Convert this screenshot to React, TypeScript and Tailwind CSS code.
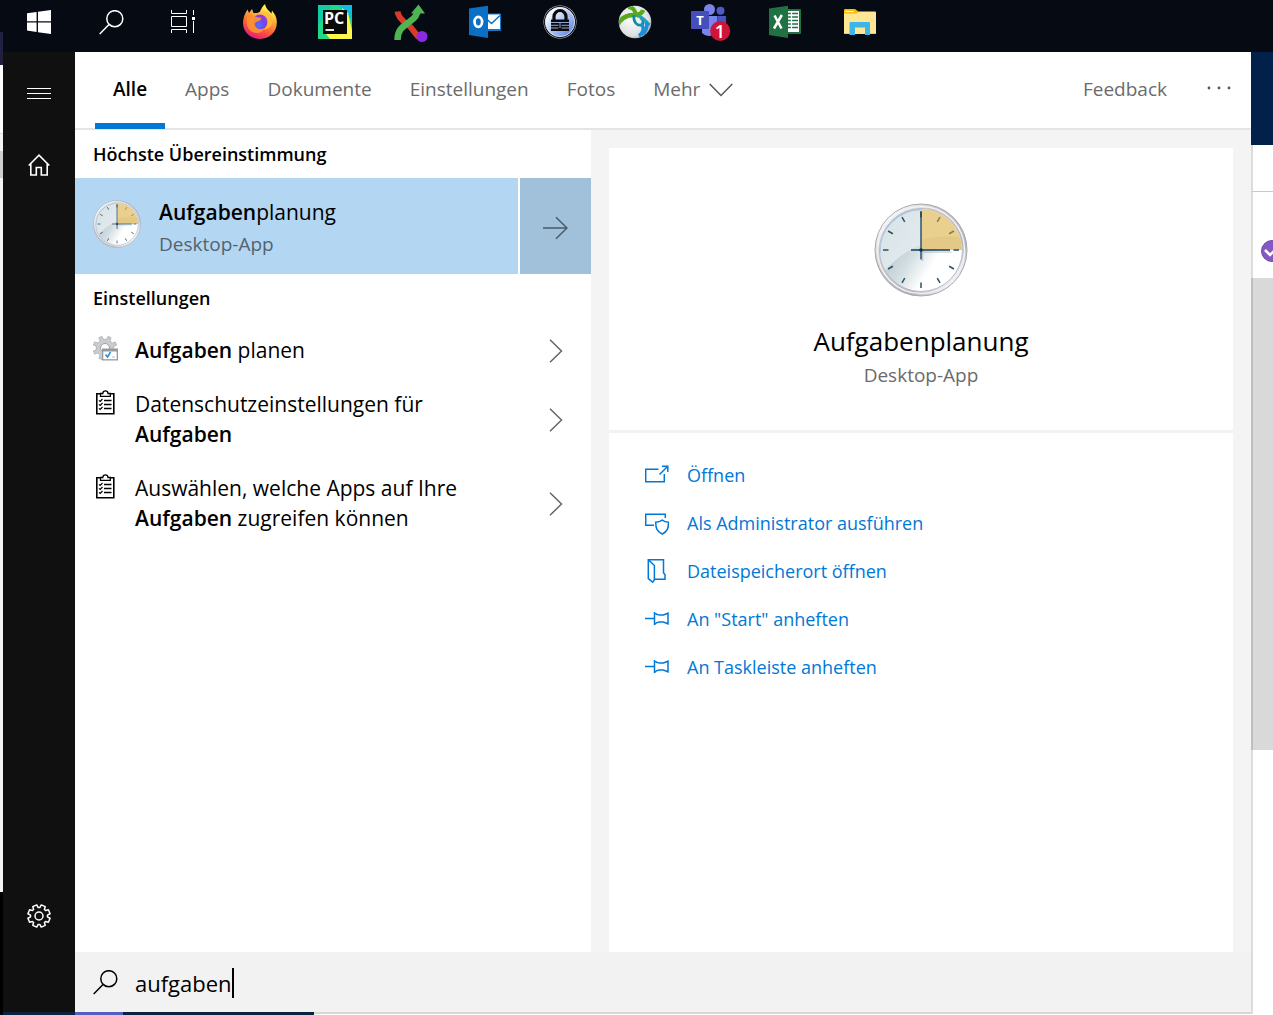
import React from "react";

function gearPath(c: number, teeth: number, outer: number, inner: number, top: number, base: number, offset: number) {
  const pt = (r: number, deg: number) => {
    const a = ((deg - 90) * Math.PI) / 180;
    return `${(c + r * Math.cos(a)).toFixed(2)} ${(c + r * Math.sin(a)).toFixed(2)}`;
  };
  const step = 360 / teeth;
  let d = "";
  for (let i = 0; i < teeth; i++) {
    const m = offset + i * step;
    d += `${i ? "L" : "M"}${pt(inner, m - base)}L${pt(outer, m - top)}L${pt(outer, m + top)}L${pt(inner, m + base)}`;
  }
  return d + "Z";
}

function WindowsIcon() {
  return (
    <svg viewBox="27 10 24 24" className="h-6 w-6" fill="#fff">
      <path d="M27 13.3 36.6 12v9.2H27zM38 11.8 51 10v11.2H38zM27 22.6h9.6V32L27 30.6zM38 22.6h13V34l-13-1.8z" />
    </svg>
  );
}

function SearchIcon() {
  return (
    <svg viewBox="0 0 25 25" className="h-[25px] w-[25px]" fill="none" stroke="currentColor" strokeWidth="1.5">
      <circle cx="15.8" cy="8.7" r="8" />
      <path d="M10 14.5.7 24" />
    </svg>
  );
}

function TaskViewIcon() {
  return (
    <svg viewBox="171 10 25 24" className="h-6 w-[25px]" fill="none" stroke="#fff">
      <path d="M171.5 10v3.5h15V10M171.5 16.5h15v10h-15zM171.5 33v-3.5h15V33M193.5 10v5M193.5 21v12" />
      <path d="M192 17h3v3h-3z" fill="#fff" stroke="none" />
    </svg>
  );
}

function FirefoxIcon() {
  return (
    <svg viewBox="242 4 36 37" className="h-[37px] w-9">
      <defs>
        <linearGradient id="ffBody" x1="0.75" y1="0" x2="0.3" y2="1">
          <stop offset="0.1" stopColor="#fff44f" />
          <stop offset="0.4" stopColor="#ffa436" />
          <stop offset="0.68" stopColor="#ff5b36" />
          <stop offset="1" stopColor="#e31587" />
        </linearGradient>
        <radialGradient id="ffGlobe" cx="0.4" cy="0.7" r="0.8">
          <stop offset="0" stopColor="#5b6df8" />
          <stop offset="0.6" stopColor="#7542e5" />
          <stop offset="1" stopColor="#b833e1" />
        </radialGradient>
      </defs>
      <path d="M243 23c0-5 1.700-9 4.500-13.500L249 13l3-4 1.500 4c3 .2 5 .2 6.500-1.500 1-2 2.500-5.500 5-7.500 .5 3 2 5 4.500 7.500l2 2 .5-3c3 4 5 7 4.800 12C277 32 269.500 39 260 39S243 32 243 23z" fill="url(#ffBody)" />
      <circle cx="260" cy="22" r="7.500" fill="url(#ffGlobe)" />
      <path d="M247 17c3-1.500 7-1 9.500 0 1.500.7 4.500 0 5 1.500-.5 2-3 2.500-5 3.500-2 .8-2 3-1 4.500 2 3 6 3.500 9 1.500-1.500 4-6 6-10.500 4.500C248 31 246 25 247 17z" fill="#ff932f" opacity="0.9" />
      <path d="M257 14.500c4-3 9-1.500 11 2l-2-.5c3 4 2 11-3 14 9-1 12-9 8-15-3-4-9-5-14-.5z" fill="#ffbd3b" opacity="0.85" />
    </svg>
  );
}

function PyCharmIcon() {
  return (
    <svg viewBox="318 5 34 34" className="h-[34px] w-[34px]">
      <path d="M318 5h34v34h-34z" fill="#21d789" />
      <path d="M318 5h13l-6 13-7 6z" fill="#15c9a5" />
      <path d="M339 5h13v14l-6-3z" fill="#0bbfe0" />
      <path d="M342 8l6 5 4 17v9h-22l-4-5 18-10z" fill="#fcf84a" />
      <path d="M323 10h24v24h-24z" fill="#0a0a0a" />
      <path d="M325.500 30h8.500" stroke="#fff" strokeWidth="1.800" />
      <text x="324" y="24" fill="#fff" fontFamily="Open Sans, sans-serif" fontWeight="700" fontSize="16">PC</text>
    </svg>
  );
}

function CrossArrowIcon() {
  return (
    <svg viewBox="394 3 36 39" className="h-[39px] w-9" fill="none">
      <path d="M399.500 11.500c1 8 8 11 11.500 14 4 4 6 8 10 12" stroke="#db3a2b" strokeWidth="6" />
      <path d="M399.500 40c0-10 5-13 11-17.500 5-4 9-6 9-13" stroke="#4db551" strokeWidth="6.500" />
      <path d="M420.500 4.500 427 13.500h-14z" fill="#4db551" />
      <circle cx="424" cy="36.500" r="5.500" fill="#8a2be2" />
    </svg>
  );
}

function OutlookIcon() {
  return (
    <svg viewBox="468 5 33 34" className="h-[34px] w-[33px]">
      <rect x="484" y="13.500" width="17" height="17.500" rx="1" fill="#1379d0" />
      <path d="M486 14.500h14v14.500h-14z" fill="#fff" />
      <path d="M485 17.500l6.500 6 8.500-8" fill="none" stroke="#0a70c6" strokeWidth="1.500" />
      <path d="M469 8.500 488 5.800v32.200l-19-3z" fill="#0a70c6" />
      <ellipse cx="478.300" cy="21.800" rx="3.800" ry="5" fill="none" stroke="#fff" strokeWidth="2.700" />
    </svg>
  );
}

function KeePassIcon() {
  return (
    <svg viewBox="543 5 34 34" className="h-[34px] w-[34px]">
      <defs>
        <linearGradient id="kp" x1="0" y1="0" x2="1" y2="1">
          <stop offset="0.2" stopColor="#f2f6ff" />
          <stop offset="1" stopColor="#4a76e0" />
        </linearGradient>
      </defs>
      <circle cx="560" cy="22" r="16.500" fill="#c9ccd4" />
      <circle cx="560" cy="22" r="16" fill="#000" />
      <circle cx="560" cy="22" r="14.700" fill="url(#kp)" stroke="#f5f7fc" strokeWidth="0.800" />
      <path d="M554 20v-3.500a6 6 0 0 1 12 0V20" fill="none" stroke="#0a0a0a" strokeWidth="3.200" />
      <path d="M551 19.500h18v11.500h-18z" fill="#0a0a0a" />
      <path d="M551 22.500h18M551 25.300h7.500M561.500 25.300h7.500M551 28h7.500M561.500 28h7.500M560 23v5" stroke="#9db6ef" strokeWidth="0.900" />
    </svg>
  );
}

function CiscoIcon() {
  return (
    <svg viewBox="618 5 34 34" className="h-[34px] w-[34px]">
      <defs>
        <radialGradient id="globe" cx="0.4" cy="0.4" r="0.65">
          <stop offset="0" stopColor="#ffffff" />
          <stop offset="0.8" stopColor="#dcdfe0" />
          <stop offset="1" stopColor="#a7adb0" />
        </radialGradient>
        <clipPath id="globeClip"><circle cx="635" cy="22" r="16" /></clipPath>
      </defs>
      <circle cx="635" cy="22" r="16.300" fill="url(#globe)" />
      <g clipPath="url(#globeClip)" fill="none">
        <path d="M617 26c3-7 9-11 17-11 5 0 8-1 9-5" stroke="#56a91c" strokeWidth="4.500" />
        <path d="M628 7c4 0 7 3 8 8" stroke="#56a91c" strokeWidth="4" />
        <path d="M634 15c-1 7 3 11 7 10 3-1 3-6-1-7" stroke="#0c8fa0" strokeWidth="2.800" />
        <path d="M637 16c6 0 9 6 13 9" stroke="#2aa0b8" strokeWidth="3" />
        <path d="M641 24c4 4 2 9-2 12M646 22c2 4 0 9-4 13" stroke="#1a8fdc" strokeWidth="3.500" />
      </g>
    </svg>
  );
}

function TeamsIcon() {
  return (
    <svg viewBox="690 4 42 40" className="h-10 w-[42px]">
      <circle cx="721.500" cy="12.800" r="4" fill="#5059c9" />
      <path d="M719 18h8v10a6 6 0 0 1-8 5z" fill="#4b53bc" />
      <circle cx="710.500" cy="11.500" r="5.500" fill="#7b83eb" />
      <path d="M703 18h15.500v12a9 9 0 0 1-15.500 5z" fill="#7b83eb" />
      <rect x="692" y="13" width="18" height="18" rx="1" fill="#464ebc" />
      <text x="701" y="27" textAnchor="middle" fill="#fff" fontFamily="Open Sans, sans-serif" fontWeight="700" fontSize="13">T</text>
      <circle cx="721.200" cy="33" r="10" fill="#cf1437" />
      <text x="721" y="39.500" textAnchor="middle" fill="#fff" fontFamily="Open Sans, sans-serif" fontWeight="600" fontSize="18">1</text>
    </svg>
  );
}

function ExcelIcon() {
  return (
    <svg viewBox="768 5 33 34" className="h-[34px] w-[33px]">
      <rect x="784" y="9" width="17" height="25" rx="1" fill="#207245" />
      <path d="M786 11h13v21h-13z" fill="#fff" />
      <path d="M787 13.500h11M787 17h11M787 20.500h11M787 24h11M787 27.500h11" stroke="#207245" strokeWidth="1.600" />
      <path d="M791.500 11v21" stroke="#fff" strokeWidth="1.200" />
      <path d="M769 8.500 788 5.800v32.200l-19-3z" fill="#207245" />
      <path d="M774.500 15.500l7 13M781.800 15 774 28.500" stroke="#fff" strokeWidth="2.500" />
    </svg>
  );
}

function ExplorerIcon() {
  return (
    <svg viewBox="844 7 32 30" className="h-[30px] w-8">
      <path d="M844 11V10a1 1 0 0 1 1-1h10l4 3v4h-15z" fill="#ffb900" />
      <path d="M845.500 11.500h8" stroke="#fff" strokeWidth="1.200" />
      <path d="M844 13.500h12.500l2.500-2h16a1 1 0 0 1 1 1V33a1 1 0 0 1-1 1h-30a1 1 0 0 1-1-1z" fill="#ffe694" />
      <path d="M849.500 35V23a1 1 0 0 1 1-1h18.500a1 1 0 0 1 1 1v12h-5v-7.500h-10V35z" fill="#3db5e8" />
      <path d="M844 33.500h5.500M870 33.500h6" stroke="#f5c74f" />
    </svg>
  );
}

function ClockIcon({ className, id }: { className: string; id: string }) {
  const ticks = [30, 60, 90, 120, 150, 180, 210, 240, 270, 300, 330, 360];
  return (
    <svg viewBox="0 0 94 94" className={className}>
      <defs>
        <linearGradient id={`${id}Rim`} x1="0" y1="0" x2="1" y2="1">
          <stop offset="0" stopColor="#b9bcc2" />
          <stop offset="0.15" stopColor="#f8f8fa" />
          <stop offset="0.35" stopColor="#c9c7cd" />
          <stop offset="0.7" stopColor="#b5b2b8" />
          <stop offset="0.85" stopColor="#f3f2f4" />
          <stop offset="1" stopColor="#b3b0b5" />
        </linearGradient>
        <linearGradient id={`${id}Face`} x1="0.1" y1="0.4" x2="0.75" y2="0.8">
          <stop offset="0" stopColor="#b4c5c9" />
          <stop offset="0.45" stopColor="#d3dfe2" />
          <stop offset="0.8" stopColor="#ffffff" />
        </linearGradient>
        <clipPath id={`${id}Clip`}><circle cx="47" cy="47" r="41" /></clipPath>
      </defs>
      <circle cx="47" cy="47" r="46" fill={`url(#${id}Rim)`} stroke="#aaa8ad" strokeWidth="1" />
      <circle cx="47" cy="47" r="43.500" fill="none" stroke="#f1f1f4" strokeWidth="1.500" />
      <circle cx="47" cy="47" r="41.500" fill={`url(#${id}Face)`} stroke="#b5bfcb" strokeWidth="1" />
      <g clipPath={`url(#${id}Clip)`}>
        <path d="M0 0h94v33C60 34 28 44 8 72L0 80z" fill="#e3ebee" opacity="0.85" />
        <path d="M5.500 50A41.500 41.500 0 0 1 47 6" fill="none" stroke="#a9bfda" strokeWidth="2.500" />
        <path d="M47 47V0H94v47z" fill="#e9d08f" />
        <path d="M47 47V37C61 33 75 33 94 34v13z" fill="#e0c680" opacity="0.7" />
      </g>
      {ticks.map((t) => (
        <path key={t} d="M47 9v5.500" stroke={t < 90 ? "#857b4d" : "#2a4f66"} strokeWidth="1.500" transform={`rotate(${t} 47 47)`} />
      ))}
      <path d="M48.500 49h29M48.500 48v10" stroke="#6d8aa8" strokeWidth="1.500" opacity="0.35" />
      <path d="M37 47h39M47 8v48.500" stroke="#173f58" strokeWidth="1.300" />
      <circle cx="47" cy="47" r="1.800" fill="#0c2f47" />
    </svg>
  );
}

function GearIcon() {
  return (
    <svg viewBox="0 0 24 24" className="h-6 w-6" fill="none" stroke="#fff" strokeWidth="1.500" strokeLinejoin="round">
      <path d={gearPath(12, 8, 11.3, 8.5, 11, 17, 22.5)} />
      <circle cx="12" cy="12" r="4" />
    </svg>
  );
}

function HomeIcon() {
  return (
    <svg viewBox="0 0 22 22" className="h-[22px] w-[22px]" fill="none" stroke="#fff" strokeWidth="1.600">
      <path d="M.7 11.500 11 1.200l10.300 10.300M2.800 9.500V21h5.500v-7.500h5V21h5.900V9.500" />
    </svg>
  );
}

function TaskGearIcon() {
  return (
    <svg viewBox="0 0 25 25" className="h-[25px] w-[25px]">
      <path d={gearPath(12, 8, 12, 8.8, 8, 12, 22.5)} fill="#c9cdd0" stroke="#a9adb0" strokeWidth="0.800" />
      <circle cx="12" cy="12" r="4.500" fill="#fff" stroke="#9da1a4" />
      <path d="M9 12.500h16V24.500H9z" fill="#969a9d" />
      <path d="M10.300 15.500h13.400v7.700H10.300z" fill="#fff" />
      <path d="M12.500 18.500l2 2.500 3-5" fill="none" stroke="#2f8fe0" strokeWidth="1.600" />
      <path d="M19 21h3" stroke="#9fc6ea" />
    </svg>
  );
}

function ClipboardIcon() {
  return (
    <svg viewBox="0 0 25 25" className="h-[25px] w-[25px]" fill="none" stroke="#000" strokeWidth="1.600">
      <path d="M7 3.800H3.800v20h17v-20H17.500" />
      <path d="M7.500 6.300V3.500h2.300c.2-3.400 5-3.400 5.200 0h2.300v2.800z" strokeWidth="1.300" />
      <path d="M11 10.500h7.500M11 14.500h7.500M11 18.500h7.500" strokeWidth="1.500" />
      <path d="M6 10.300l1.200 1.200 2.300-2.500M6 14.300l1.200 1.200L9.500 13M6 18.300l1.200 1.200L9.500 17" strokeWidth="1.200" />
    </svg>
  );
}

function ChevronRight() {
  return (
    <svg viewBox="0 0 14 24" className="h-6 w-[14px] shrink-0" fill="none" stroke="#666" strokeWidth="1.500">
      <path d="M1 .7 12.500 12 1 23.300" />
    </svg>
  );
}

function ActionSvg({ children }: { children: React.ReactNode }) {
  return (
    <svg viewBox="0 0 24 24" className="h-6 w-6 shrink-0" fill="none" stroke="currentColor" strokeWidth="1.500">
      {children}
    </svg>
  );
}

const pin = <path d="M0 11.500h9.500M9.500 5v13M9.500 5.500c2 2.500 3 2.500 5 2.500h4L23 6.200v10.600L18.500 15h-4c-2 0-3 0-5 2.500" />;

const actions = [
  { label: "Öffnen", icon: <path d="M13.500 6.200H.7v12.600h18.600V11M14.500 11.500l8-8M17 3.200h5.800V9" /> },
  {
    label: "Als Administrator ausführen",
    icon: (
      <>
        <path d="M9 14.300H.7V3.200h19.600V7" />
        <path d="M17.200 9.200c-2 1.500-4 2-6.500 2 0 6 1.200 9 6.500 12 5.300-3 6.300-6 6.300-12-2.400 0-4.300-.5-6.300-2z" />
      </>
    ),
  },
  { label: "Dateispeicherort öffnen", icon: <path d="M3.300.7h15.200v13l1.500 2v4.500H9.500M3.300.7v19l4.400 3.500c1.200-1 1.700-2 1.700-4V6.500z" /> },
  { label: 'An "Start" anheften', icon: pin },
  { label: "An Taskleiste anheften", icon: pin },
];

const pinnedApps = [
  ["Firefox", FirefoxIcon],
  ["PyCharm", PyCharmIcon],
  ["Git-Client", CrossArrowIcon],
  ["Outlook", OutlookIcon],
  ["KeePass", KeePassIcon],
  ["AnyConnect", CiscoIcon],
  ["Teams", TeamsIcon],
  ["Excel", ExcelIcon],
  ["Explorer", ExplorerIcon],
] as const;

const tabs = ["Alle", "Apps", "Dokumente", "Einstellungen", "Fotos"];

function Taskbar() {
  const system = "flex h-11 w-[72px] items-center justify-center text-white";
  return (
    <nav aria-label="Taskleiste" className="relative flex h-[52px] shrink-0 items-start bg-[#060b13] pl-[3px]">
      <div className="absolute bottom-0 left-0 h-5 w-[3px] bg-[#22203f]" />
      <button aria-label="Start" className={system}><WindowsIcon /></button>
      <button aria-label="Suchen" className={system}><SearchIcon /></button>
      <button aria-label="Aktive Anwendungen" className={system}><TaskViewIcon /></button>
      <div className="ml-[3px] flex">
        {pinnedApps.map(([name, Icon]) => (
          <button key={name} aria-label={name} className="flex h-11 w-[75px] items-center justify-center"><Icon /></button>
        ))}
      </div>
    </nav>
  );
}

function Setting({ icon, children }: { icon: React.ReactNode; children: React.ReactNode }) {
  return (
    <button className="flex w-full items-start pr-7 pl-[18px] text-left text-[21px] leading-[30px] text-black">
      <span className="mt-3 mr-[17px]">{icon}</span>
      <span className="flex-1 pt-[11px] pr-16 pb-[13px]">{children}</span>
      <span className="self-center"><ChevronRight /></span>
    </button>
  );
}

export default function App() {
  return (
    <div className="flex min-h-screen flex-col bg-[#0b2340] font-['Open_Sans',sans-serif]">
      <Taskbar />
      <div className="flex flex-1">
        <div className="flex w-[3px] shrink-0 flex-col bg-black">
          <div className="h-[13px] bg-[#22203f]" />
          <div className="h-[68px] bg-white" />
          <div className="h-[18px] border-t border-[#ddd] bg-[#f4f4f4]" />
          <div className="h-[27px] bg-[#cfcfcf]" />
          <div className="flex-1 bg-[#f4f4f4]" />
          <div className="h-[123px] bg-black" />
        </div>

        <aside className="mb-[3px] flex w-[72px] shrink-0 flex-col items-center bg-[#101010] pt-[5px] pb-[60px]">
          <button aria-label="Menü" className="flex h-[72px] w-full flex-col items-center justify-center gap-1">
            <span className="h-px w-6 bg-white" />
            <span className="h-px w-6 bg-white" />
            <span className="h-px w-6 bg-white" />
          </button>
          <button aria-label="Startseite" className="flex h-[72px] w-full items-center justify-center"><HomeIcon /></button>
          <button aria-label="Einstellungen" className="mt-auto flex h-[72px] w-full items-center justify-center"><GearIcon /></button>
        </aside>

        <div className="flex min-w-0 flex-1 flex-col">
          <main className="flex flex-1 flex-col bg-white">
            <header className="flex h-[78px] shrink-0 items-stretch border-b-2 border-[#e5e5e5] pr-[18px] pl-5 text-[19px] text-[#6b6b6b]">
              <div role="tablist" className="-mb-px flex flex-1 gap-0.5">
                {tabs.map((t, i) => (
                  <button
                    key={t}
                    role="tab"
                    aria-selected={i === 0}
                    className={
                      i === 0
                        ? "border-b-6 border-[#0078d7] px-[18px] pt-1 font-semibold text-black"
                        : "border-b-6 border-transparent px-[18px] pt-1"
                    }
                  >
                    {t}
                  </button>
                ))}
                <button className="flex items-center gap-[9px] border-b-6 border-transparent px-[18px] pt-1">
                  Mehr
                  <svg viewBox="0 0 24 14" className="h-[14px] w-6" fill="none" stroke="#555" strokeWidth="1.500">
                    <path d="M.7 1 12 12.500 23.300 1" />
                  </svg>
                </button>
              </div>
              <button className="-mb-px border-b-6 border-transparent px-5 pt-1">Feedback</button>
              <button aria-label="Weitere Optionen" className="ml-[18px] flex w-7 items-center justify-center pb-1">
                <svg viewBox="0 0 24 4" className="h-1 w-6" fill="#555">
                  <circle cx="2" cy="2" r="1.400" />
                  <circle cx="12" cy="2" r="1.400" />
                  <circle cx="22" cy="2" r="1.400" />
                </svg>
              </button>
            </header>

            <div className="flex flex-1">
              <section className="flex w-[516px] shrink-0 flex-col">
                <h2 className="flex h-12 items-center px-[18px] text-[18px] font-semibold text-black">Höchste Übereinstimmung</h2>
                <div className="flex h-24 gap-0.5">
                  <button className="flex flex-1 items-center bg-[#b3d6f2] pl-[18px] text-left">
                    <ClockIcon id="small" className="mb-1 h-12 w-12" />
                    <span className="ml-[18px] flex flex-col pt-1">
                      <span className="text-[21px] leading-8 text-black"><b className="font-semibold">Aufgaben</b>planung</span>
                      <span className="text-[19px] leading-8 text-[#53636f]">Desktop-App</span>
                    </span>
                  </button>
                  <button aria-label="Details" className="flex w-[71px] items-center justify-center bg-[#a1c0da] pt-1">
                    <svg viewBox="0 0 25 24" className="h-6 w-[25px]" fill="none" stroke="#4a5a66" strokeWidth="1.500">
                      <path d="M0 12h24M13 1.200 24 12 13 22.800" />
                    </svg>
                  </button>
                </div>
                <h2 className="mb-0.5 flex h-12 items-center px-[18px] text-[18px] font-semibold text-black">Einstellungen</h2>
                <Setting icon={<TaskGearIcon />}><b className="font-semibold">Aufgaben</b> planen</Setting>
                <Setting icon={<ClipboardIcon />}>Datenschutzeinstellungen für <b className="font-semibold">Aufgaben</b></Setting>
                <Setting icon={<ClipboardIcon />}>Auswählen, welche Apps auf Ihre <b className="font-semibold">Aufgaben</b> zugreifen können</Setting>
              </section>

              <section className="flex flex-1 flex-col bg-[#f4f4f4] px-[18px] pt-[18px]">
                <div className="flex h-[285px] flex-col items-center border-b-3 border-[#f2f2f2] bg-white pt-[55px]">
                  <ClockIcon id="large" className="h-[94px] w-[94px]" />
                  <h1 className="mt-[26px] text-[26px] leading-9 text-black">Aufgabenplanung</h1>
                  <p className="text-[19px] leading-8 text-[#6b6b6b]">Desktop-App</p>
                </div>
                <div className="flex flex-1 flex-col bg-white px-9 pt-[18px]">
                  {actions.map((a) => (
                    <button key={a.label} className="flex h-12 items-center gap-[18px] text-left text-[18px] text-[#0078d7]">
                      <ActionSvg>{a.icon}</ActionSvg>
                      {a.label}
                    </button>
                  ))}
                </div>
              </section>
            </div>

            <label className="flex h-[60px] shrink-0 items-center bg-[#f2f2f2] pl-[18px] text-black">
              <SearchIcon />
              <input
                type="text"
                aria-label="Suche"
                defaultValue="aufgaben"
                className="ml-[17px] h-10 pt-0.5 text-[22px] caret-transparent outline-none [field-sizing:content]"
              />
              <span className="mt-0.5 h-[30px] w-0.5 bg-black" />
            </label>
          </main>
          <div className="flex h-[3px]">
            <div className="w-12 bg-[#5a5cc0]" />
            <div className="w-[191px] bg-[#0b2340]" />
            <div className="flex-1 border-t-2 border-[#d8d8d8] bg-white" />
          </div>
        </div>

        <div className="flex w-[22px] shrink-0 flex-col overflow-hidden bg-white">
          <div className="h-[93px] bg-[#02214a]" />
          <div className="h-[47px] border-b border-l-2 border-b-[#c8c8c8] border-l-[#dcdcdc]" />
          <div className="flex h-[86px] items-center border-l-2 border-[#dcdcdc] pt-8 pl-2">
            <svg viewBox="0 0 22 22" className="h-[22px] w-[22px] shrink-0">
              <circle cx="11" cy="11" r="10.500" fill="#8459c4" stroke="#6f4bab" />
              <path d="M4 10l5 5 8-8" fill="none" stroke="#fff" strokeWidth="2.500" />
            </svg>
          </div>
          <div className="h-[472px] border-l-2 border-[#bfbfbf] bg-[#d9d9d9]" />
          <div className="mb-px flex-1 border-l-2 border-[#dcdcdc]" />
        </div>
      </div>
    </div>
  );
}
